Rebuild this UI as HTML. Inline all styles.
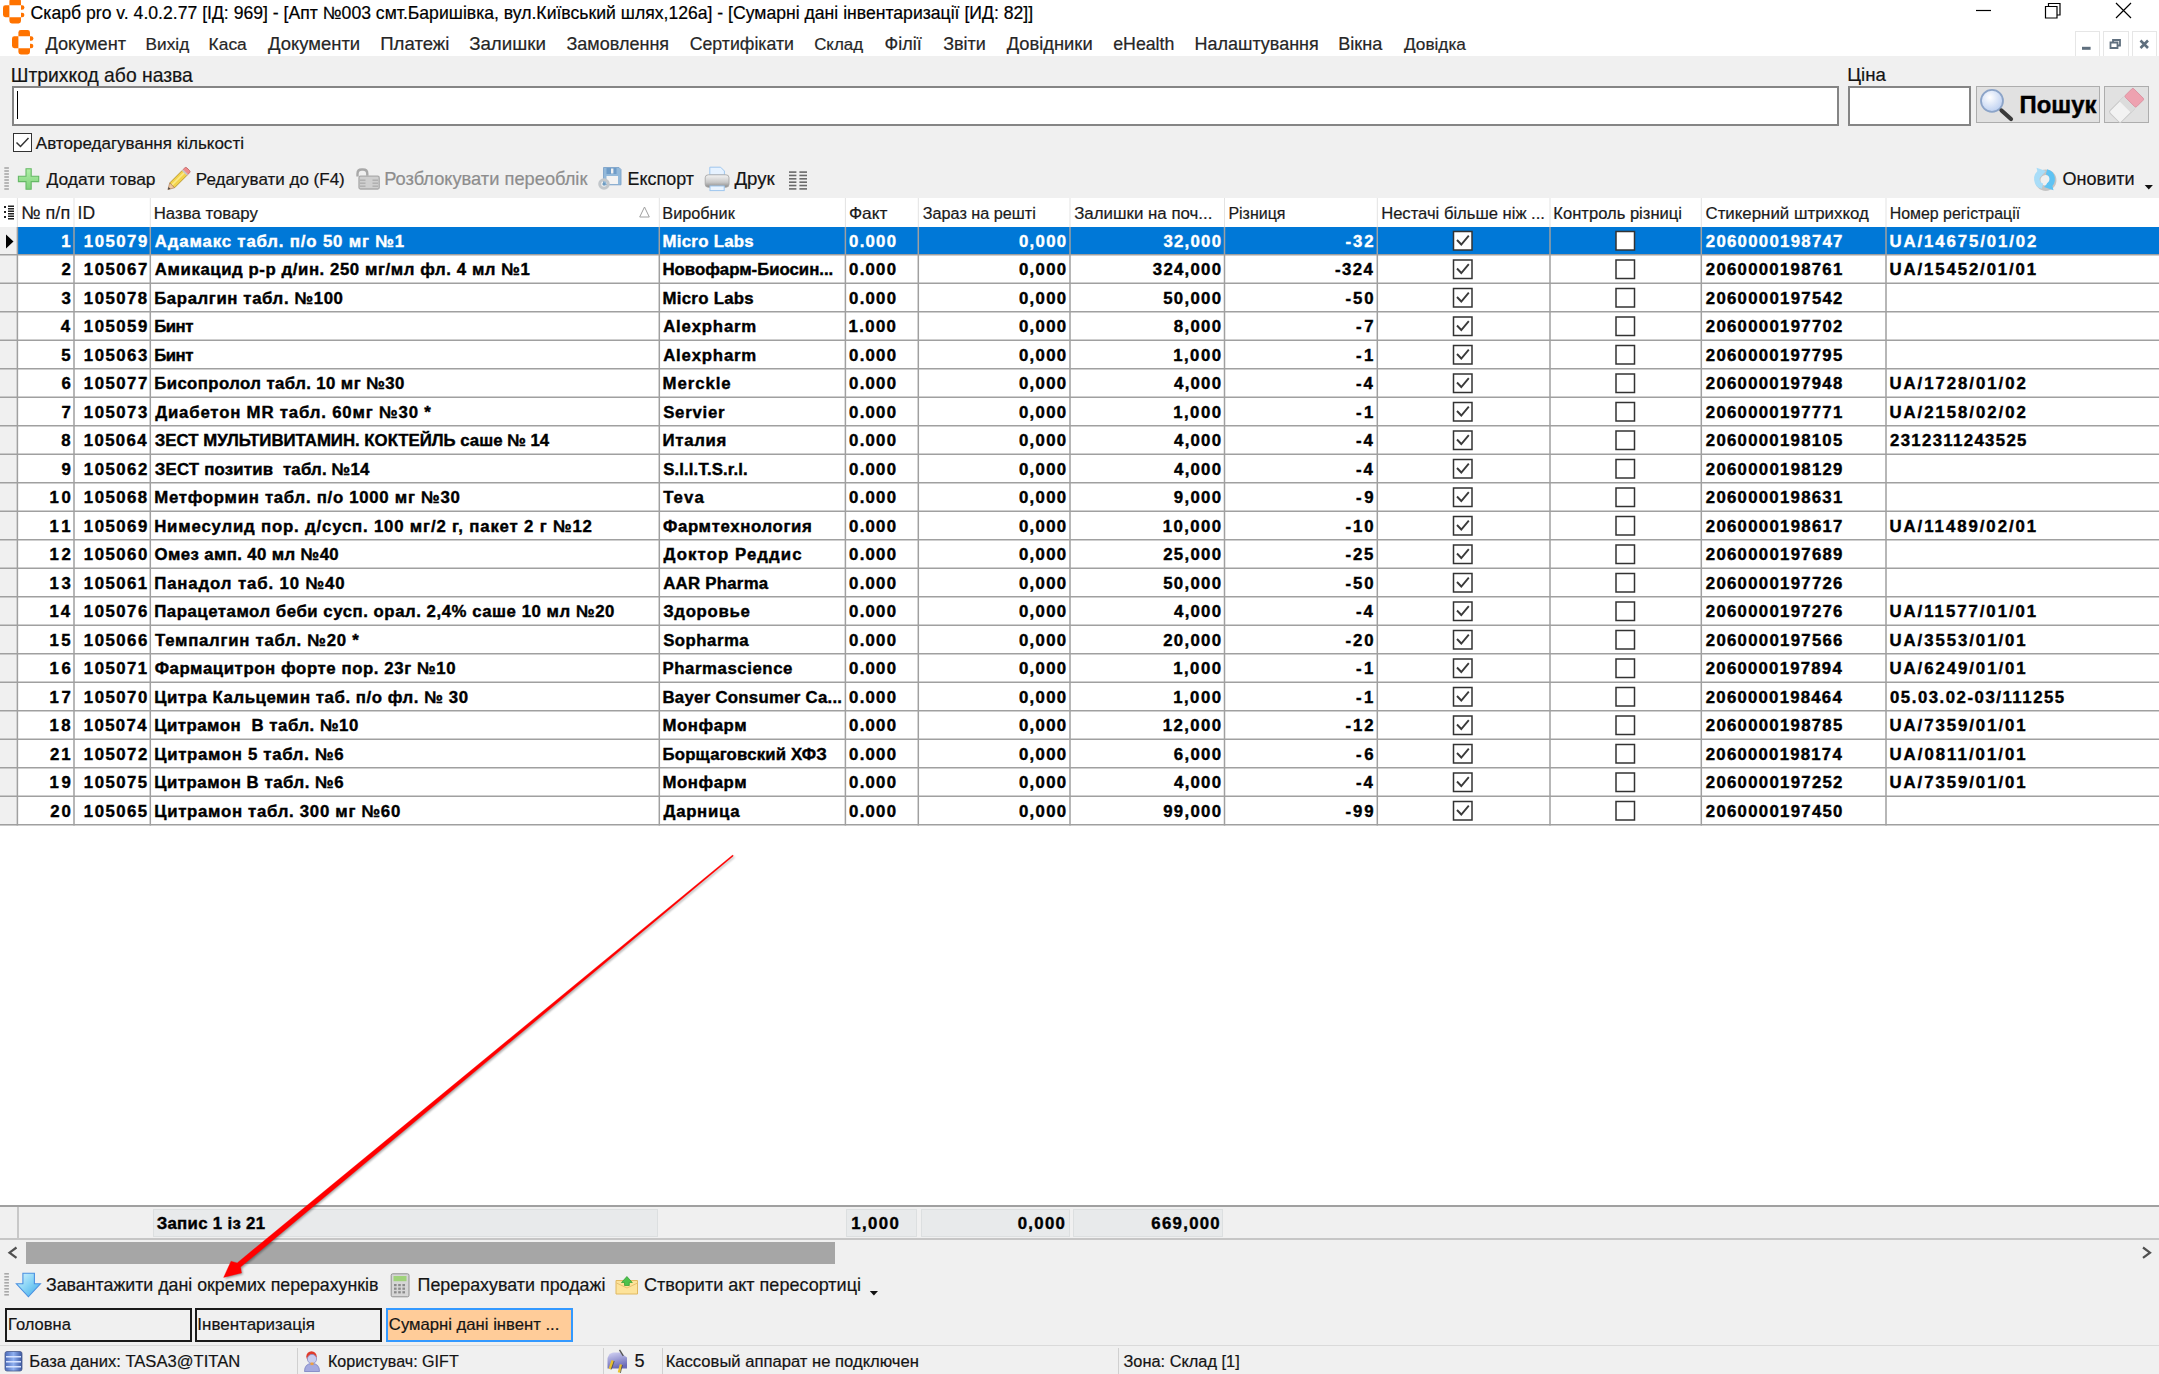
<!DOCTYPE html>
<html><head><meta charset="utf-8"><title>Скарб pro</title>
<style>
html,body{margin:0;padding:0;}
body{width:2159px;height:1374px;overflow:hidden;position:relative;background:#fff;font-family:"Liberation Sans",sans-serif;color:#000;}
.t{position:absolute;white-space:nowrap;-webkit-text-stroke:0.2px currentColor;}
.b{-webkit-text-stroke:0.4px currentColor;}
.r{position:absolute;box-sizing:border-box;}
svg{position:absolute;overflow:visible;}
</style></head><body>
<div class="t" style="top:3px;font-size:17.63px;line-height:21px;left:30.62px;">Скарб pro v. 4.0.2.77 [ІД: 969] - [Апт №003 смт.Баришівка, вул.Київський шлях,126а] - [Сумарні дані інвентаризації [ИД: 82]]</div>
<svg style="left:3.4px;top:-1.4px" width="21.4" height="24.4" viewBox="0 0 21.4 24.4">
<g fill="#ff7300">
<path d="M6.4 6.2V2.4Q6.4 0 8.8 0H15.6Q18 0 18 2.4V6.2Z"/>
<path d="M6.4 6.2V18.2H2.4Q0 18.2 0 15.8V8.6Q0 6.2 2.4 6.2Z"/>
<path d="M6.4 18.2V22Q6.4 24.4 8.8 24.4H15.6Q18 24.4 18 22V18.2Z"/>
<path d="M18 6.2H19.2Q21.4 6.2 21.4 8.4V8.5Q21.4 10.7 19.2 10.7H18Z"/>
<path d="M18 13.7H19.2Q21.4 13.7 21.4 15.9V16Q21.4 18.2 19.2 18.2H18Z"/>
</g></svg>
<svg style="left:1970px;top:0px" width="189" height="28" viewBox="0 0 189 28"><path d="M6 10.5h15" stroke="#000" stroke-width="1.2"/><path d="M75.5 6.5h11.5v11.5h-11.5z M78.5 6.5v-3h11.5v11.5h-3" fill="none" stroke="#000" stroke-width="1.2"/><path d="M146 3l15 15M161 3l-15 15" stroke="#000" stroke-width="1.2"/></svg>
<svg style="left:11.6px;top:30.2px" width="21.4" height="24.4" viewBox="0 0 21.4 24.4">
<g fill="#ff7300">
<path d="M6.4 6.2V2.4Q6.4 0 8.8 0H15.6Q18 0 18 2.4V6.2Z"/>
<path d="M6.4 6.2V18.2H2.4Q0 18.2 0 15.8V8.6Q0 6.2 2.4 6.2Z"/>
<path d="M6.4 18.2V22Q6.4 24.4 8.8 24.4H15.6Q18 24.4 18 22V18.2Z"/>
<path d="M18 6.2H19.2Q21.4 6.2 21.4 8.4V8.5Q21.4 10.7 19.2 10.7H18Z"/>
<path d="M18 13.7H19.2Q21.4 13.7 21.4 15.9V16Q21.4 18.2 19.2 18.2H18Z"/>
</g></svg>
<div class="t" style="top:33px;font-size:18.2px;line-height:22px;color:#262626;left:45.40px;">Документ</div>
<div class="t" style="top:34px;font-size:17.23px;line-height:21px;color:#262626;left:145.62px;">Вихід</div>
<div class="t" style="top:34px;font-size:17.37px;line-height:21px;color:#262626;left:208.61px;">Каса</div>
<div class="t" style="top:33px;font-size:18.47px;line-height:22px;color:#262626;left:268.00px;">Документи</div>
<div class="t" style="top:33px;font-size:18.62px;line-height:22px;color:#262626;left:380.21px;">Платежі</div>
<div class="t" style="top:33px;font-size:18.74px;line-height:22px;color:#262626;left:469.14px;">Залишки</div>
<div class="t" style="top:33px;font-size:18.02px;line-height:22px;color:#262626;left:566.46px;">Замовлення</div>
<div class="t" style="top:34px;font-size:17.73px;line-height:21px;color:#262626;left:689.71px;">Сертифікати</div>
<div class="t" style="top:35px;font-size:16.96px;line-height:20px;color:#262626;left:814.15px;">Склад</div>
<div class="t" style="top:33px;font-size:18.03px;line-height:22px;color:#262626;left:884.60px;">Філії</div>
<div class="t" style="top:33px;font-size:17.97px;line-height:22px;color:#262626;left:943.16px;">Звіти</div>
<div class="t" style="top:33px;font-size:18.33px;line-height:22px;color:#262626;left:1006.70px;">Довідники</div>
<div class="t" style="top:34px;font-size:17.76px;line-height:21px;color:#262626;left:1113.19px;">eHealth</div>
<div class="t" style="top:33px;font-size:17.98px;line-height:22px;color:#262626;left:1194.56px;">Налаштування</div>
<div class="t" style="top:33px;font-size:18.14px;line-height:22px;color:#262626;left:1338.25px;">Вікна</div>
<div class="t" style="top:34px;font-size:17.22px;line-height:21px;color:#262626;left:1404.00px;">Довідка</div>
<div class="r" style="left:2074.5px;top:31px;width:25.5px;height:25.5px;background:#fff;border:1px solid #e6e6e6;"></div>
<div class="r" style="left:2103px;top:31px;width:25.5px;height:25.5px;background:#fff;border:1px solid #e6e6e6;"></div>
<div class="r" style="left:2131.8px;top:31px;width:25.5px;height:25.5px;background:#fff;border:1px solid #e6e6e6;"></div>
<svg style="left:2074px;top:31px" width="85" height="26" viewBox="0 0 85 26"><rect x="8" y="15.8" width="8.6" height="3" fill="#5f6f7e"/><path d="M36.5 11.5h7v5.5h-7z M39 11.5v-2.5h7v5.5h-2.5" fill="none" stroke="#5f6f7e" stroke-width="1.8"/><path d="M66.5 9.5l7.5 7.5M74 9.5l-7.5 7.5" stroke="#5f6f7e" stroke-width="2.6"/></svg>
<div class="r" style="left:0px;top:56px;width:2159px;height:142px;background:#f0f0f0;"></div>
<div class="t" style="top:64px;font-size:19.32px;line-height:23px;color:#141414;left:10.75px;">Штрихкод або назва</div>
<div class="r" style="left:12px;top:86px;width:1827px;height:40px;background:#fff;border:2px solid #858585;"></div>
<div class="r" style="left:16.5px;top:91px;width:1.5px;height:28px;background:#000;"></div>
<div class="t" style="top:64px;font-size:18.65px;line-height:22px;color:#141414;left:1847.31px;">Ціна</div>
<div class="r" style="left:1848px;top:86px;width:123px;height:40px;background:#fff;border:2px solid #858585;"></div>
<div class="r" style="left:1975.5px;top:86px;width:124.5px;height:37px;background:#e1e1e1;border:1.5px solid #adadad;"></div>
<div class="t b" style="top:90px;font-size:23.89px;line-height:29px;font-weight:bold;left:2019.57px;">Пошук</div>
<div class="r" style="left:2104.4px;top:86px;width:44.4px;height:37px;background:#e1e1e1;border:1.5px solid #adadad;"></div>
<div class="r" style="left:12.5px;top:133px;width:19px;height:19px;background:#fff;border:1.5px solid #333;"></div>
<svg style="left:12.5px;top:133px" width="19" height="19" viewBox="0 0 19 19"><path d="M3.5 9.5l4 4 8-8.5" fill="none" stroke="#333" stroke-width="1.5"/></svg>
<div class="t" style="top:134px;font-size:17.04px;line-height:20px;color:#141414;left:35.80px;">Авторедагування кількості</div>
<div class="t" style="top:169px;font-size:17.4px;line-height:21px;color:#141414;left:46.50px;">Додати товар</div>
<div class="t" style="top:170px;font-size:17.01px;line-height:20px;color:#141414;left:195.84px;">Редагувати до (F4)</div>
<div class="t" style="top:168px;font-size:18.28px;line-height:22px;color:#8d8d8d;left:384.14px;">Розблокувати переоблік</div>
<div class="t" style="top:169px;font-size:17.91px;line-height:21px;color:#141414;left:627.57px;">Експорт</div>
<div class="t" style="top:168px;font-size:18.64px;line-height:22px;color:#141414;left:734.50px;">Друк</div>
<div class="t" style="top:168px;font-size:18.02px;line-height:22px;color:#141414;left:2062.58px;">Оновити</div>
<div class="r" style="left:0px;top:227px;width:17.4px;height:598.5px;background:#f0f0f0;"></div>
<div class="r" style="left:17.4px;top:227px;width:2141.6px;height:27.5px;background:#0078d7;"></div>
<svg style="left:0;top:0" width="2159" height="1374"><rect x="0" y="254.0" width="2159" height="1.5" fill="#a0a0a0"/><rect x="0" y="282.5" width="2159" height="1.5" fill="#a0a0a0"/><rect x="0" y="311.0" width="2159" height="1.5" fill="#a0a0a0"/><rect x="0" y="339.5" width="2159" height="1.5" fill="#a0a0a0"/><rect x="0" y="368.0" width="2159" height="1.5" fill="#a0a0a0"/><rect x="0" y="396.5" width="2159" height="1.5" fill="#a0a0a0"/><rect x="0" y="425.0" width="2159" height="1.5" fill="#a0a0a0"/><rect x="0" y="453.5" width="2159" height="1.5" fill="#a0a0a0"/><rect x="0" y="482.0" width="2159" height="1.5" fill="#a0a0a0"/><rect x="0" y="510.5" width="2159" height="1.5" fill="#a0a0a0"/><rect x="0" y="539.0" width="2159" height="1.5" fill="#a0a0a0"/><rect x="0" y="567.5" width="2159" height="1.5" fill="#a0a0a0"/><rect x="0" y="596.0" width="2159" height="1.5" fill="#a0a0a0"/><rect x="0" y="624.5" width="2159" height="1.5" fill="#a0a0a0"/><rect x="0" y="653.0" width="2159" height="1.5" fill="#a0a0a0"/><rect x="0" y="681.5" width="2159" height="1.5" fill="#a0a0a0"/><rect x="0" y="710.0" width="2159" height="1.5" fill="#a0a0a0"/><rect x="0" y="738.5" width="2159" height="1.5" fill="#a0a0a0"/><rect x="0" y="767.0" width="2159" height="1.5" fill="#a0a0a0"/><rect x="0" y="795.5" width="2159" height="1.5" fill="#a0a0a0"/><rect x="0" y="824.0" width="2159" height="1.5" fill="#a0a0a0"/><rect x="16.65" y="227" width="1.5" height="598.5" fill="#a0a0a0"/><rect x="16.9" y="198" width="1" height="29" fill="#e3e3e3"/><rect x="73.25" y="227" width="1.5" height="598.5" fill="#a0a0a0"/><rect x="73.5" y="198" width="1" height="29" fill="#e3e3e3"/><rect x="149.55" y="227" width="1.5" height="598.5" fill="#a0a0a0"/><rect x="149.8" y="198" width="1" height="29" fill="#e3e3e3"/><rect x="658.55" y="227" width="1.5" height="598.5" fill="#a0a0a0"/><rect x="658.8" y="198" width="1" height="29" fill="#e3e3e3"/><rect x="844.65" y="227" width="1.5" height="598.5" fill="#a0a0a0"/><rect x="844.9" y="198" width="1" height="29" fill="#e3e3e3"/><rect x="917.55" y="227" width="1.5" height="598.5" fill="#a0a0a0"/><rect x="917.8" y="198" width="1" height="29" fill="#e3e3e3"/><rect x="1069.25" y="227" width="1.5" height="598.5" fill="#a0a0a0"/><rect x="1069.5" y="198" width="1" height="29" fill="#e3e3e3"/><rect x="1223.75" y="227" width="1.5" height="598.5" fill="#a0a0a0"/><rect x="1224.0" y="198" width="1" height="29" fill="#e3e3e3"/><rect x="1376.55" y="227" width="1.5" height="598.5" fill="#a0a0a0"/><rect x="1376.8" y="198" width="1" height="29" fill="#e3e3e3"/><rect x="1549.25" y="227" width="1.5" height="598.5" fill="#a0a0a0"/><rect x="1549.5" y="198" width="1" height="29" fill="#e3e3e3"/><rect x="1700.55" y="227" width="1.5" height="598.5" fill="#a0a0a0"/><rect x="1700.8" y="198" width="1" height="29" fill="#e3e3e3"/><rect x="1885.25" y="227" width="1.5" height="598.5" fill="#a0a0a0"/><rect x="1885.5" y="198" width="1" height="29" fill="#e3e3e3"/></svg>
<div class="t" style="top:202px;font-size:18.09px;line-height:22px;color:#1a1a1a;left:21.17px;">№ п/п</div>
<div class="t" style="top:203px;font-size:17.51px;line-height:21px;color:#1a1a1a;left:77.62px;">ID</div>
<div class="t" style="top:204px;font-size:16.82px;line-height:20px;color:#1a1a1a;left:153.65px;">Назва товару</div>
<div class="t" style="top:203px;font-size:16.26px;line-height:20px;color:#1a1a1a;left:662.30px;">Виробник</div>
<div class="t" style="top:203px;font-size:17.32px;line-height:21px;color:#1a1a1a;left:848.93px;">Факт</div>
<div class="t" style="top:204px;font-size:16.22px;line-height:19px;color:#1a1a1a;left:922.81px;">Зараз на решті</div>
<div class="t" style="top:204px;font-size:16.88px;line-height:20px;color:#1a1a1a;left:1074.19px;">Залишки на поч...</div>
<div class="t" style="top:204px;font-size:15.97px;line-height:19px;color:#1a1a1a;left:1228.42px;">Різниця</div>
<div class="t" style="top:204px;font-size:16.6px;line-height:20px;color:#1a1a1a;left:1381.17px;">Нестачі більше ніж ...</div>
<div class="t" style="top:204px;font-size:16.57px;line-height:20px;color:#1a1a1a;left:1553.37px;">Контроль різниці</div>
<div class="t" style="top:204px;font-size:16.86px;line-height:20px;color:#1a1a1a;left:1705.46px;">Стикерний штрихкод</div>
<div class="t" style="top:204px;font-size:15.91px;line-height:19px;color:#1a1a1a;left:1889.73px;">Номер регістрації</div>
<svg style="left:0;top:198px" width="660" height="29" viewBox="0 0 660 29"><path d="M644.5 9l-4.8 10h9.6z" fill="none" stroke="#a0a0a0" stroke-width="1"/><g fill="#222"><rect x="4" y="8" width="2" height="2"/><rect x="4" y="13" width="2" height="2"/><rect x="4" y="18" width="2" height="2"/><rect x="8" y="7.5" width="6" height="1.5"/><rect x="8" y="10" width="6" height="1.5"/><rect x="8" y="12.5" width="6" height="1.5"/><rect x="8" y="15" width="6" height="1.5"/><rect x="8" y="17.5" width="6" height="1.5"/><rect x="8" y="20" width="6" height="1.5"/></g></svg>
<svg style="left:0;top:227px" width="17" height="28"><path d="M6 7.5v14l7.5-7z" fill="#000"/></svg>
<div class="t b" style="top:232px;font-size:16.8px;line-height:20px;color:#fff;font-weight:bold;right:2088.36px;">1</div>
<div class="t b" style="top:232px;font-size:16.8px;line-height:20px;color:#fff;font-weight:bold;letter-spacing:1.471px;right:2010.32px;">105079</div>
<div class="t b" style="top:232px;font-size:16.8px;line-height:20px;color:#fff;font-weight:bold;letter-spacing:0.836px;left:154.86px;">Адамакс табл. п/о 50 мг №1</div>
<div class="t b" style="top:232px;font-size:16.8px;line-height:20px;color:#fff;font-weight:bold;letter-spacing:0.292px;left:662.49px;">Micro Labs</div>
<div class="t b" style="top:232px;font-size:16.8px;line-height:20px;color:#fff;font-weight:bold;letter-spacing:1.218px;left:849.10px;">0.000</div>
<div class="t b" style="top:232px;font-size:16.8px;line-height:20px;color:#fff;font-weight:bold;letter-spacing:1.318px;right:1091.47px;">0,000</div>
<div class="t b" style="top:232px;font-size:16.8px;line-height:20px;color:#fff;font-weight:bold;letter-spacing:1.262px;right:936.73px;">32,000</div>
<div class="t b" style="top:232px;font-size:16.8px;line-height:20px;color:#fff;font-weight:bold;letter-spacing:1.915px;right:783.48px;">-32</div>
<div class="t b" style="top:232px;font-size:16.8px;line-height:20px;color:#fff;font-weight:bold;letter-spacing:1.275px;left:1705.80px;">2060000198747</div>
<div class="t b" style="top:232px;font-size:16.8px;line-height:20px;color:#fff;font-weight:bold;letter-spacing:1.893px;left:1889.49px;">UA/14675/01/02</div>
<div class="t b" style="top:260px;font-size:16.8px;line-height:20px;font-weight:bold;right:2088.19px;">2</div>
<div class="t b" style="top:260px;font-size:16.8px;line-height:20px;font-weight:bold;letter-spacing:1.471px;right:2010.32px;">105067</div>
<div class="t b" style="top:260px;font-size:16.8px;line-height:20px;font-weight:bold;letter-spacing:0.57px;left:154.86px;">Амикацид р-р д/ин. 250 мг/мл фл. 4 мл №1</div>
<div class="t b" style="top:260px;font-size:16.8px;line-height:20px;font-weight:bold;letter-spacing:-0.011px;left:662.49px;">Новофарм-Биосин...</div>
<div class="t b" style="top:260px;font-size:16.8px;line-height:20px;font-weight:bold;letter-spacing:1.218px;left:849.10px;">0.000</div>
<div class="t b" style="top:260px;font-size:16.8px;line-height:20px;font-weight:bold;letter-spacing:1.318px;right:1091.47px;">0,000</div>
<div class="t b" style="top:260px;font-size:16.8px;line-height:20px;font-weight:bold;letter-spacing:1.253px;right:936.74px;">324,000</div>
<div class="t b" style="top:260px;font-size:16.8px;line-height:20px;font-weight:bold;letter-spacing:1.455px;right:784.61px;">-324</div>
<div class="t b" style="top:260px;font-size:16.8px;line-height:20px;font-weight:bold;letter-spacing:1.261px;left:1705.80px;">2060000198761</div>
<div class="t b" style="top:260px;font-size:16.8px;line-height:20px;font-weight:bold;letter-spacing:1.88px;left:1889.49px;">UA/15452/01/01</div>
<div class="t b" style="top:289px;font-size:16.8px;line-height:20px;font-weight:bold;right:2088.19px;">3</div>
<div class="t b" style="top:289px;font-size:16.8px;line-height:20px;font-weight:bold;letter-spacing:1.437px;right:2010.52px;">105078</div>
<div class="t b" style="top:289px;font-size:16.8px;line-height:20px;font-weight:bold;letter-spacing:0.599px;left:154.19px;">Баралгин табл. №100</div>
<div class="t b" style="top:289px;font-size:16.8px;line-height:20px;font-weight:bold;letter-spacing:0.292px;left:662.49px;">Micro Labs</div>
<div class="t b" style="top:289px;font-size:16.8px;line-height:20px;font-weight:bold;letter-spacing:1.218px;left:849.10px;">0.000</div>
<div class="t b" style="top:289px;font-size:16.8px;line-height:20px;font-weight:bold;letter-spacing:1.318px;right:1091.47px;">0,000</div>
<div class="t b" style="top:289px;font-size:16.8px;line-height:20px;font-weight:bold;letter-spacing:1.295px;right:936.70px;">50,000</div>
<div class="t b" style="top:289px;font-size:16.8px;line-height:20px;font-weight:bold;letter-spacing:1.915px;right:783.48px;">-50</div>
<div class="t b" style="top:289px;font-size:16.8px;line-height:20px;font-weight:bold;letter-spacing:1.275px;left:1705.80px;">2060000197542</div>
<div class="t b" style="top:317px;font-size:16.8px;line-height:20px;font-weight:bold;right:2088.86px;">4</div>
<div class="t b" style="top:317px;font-size:16.8px;line-height:20px;font-weight:bold;letter-spacing:1.471px;right:2010.32px;">105059</div>
<div class="t b" style="top:317px;font-size:16.8px;line-height:20px;font-weight:bold;letter-spacing:-0.479px;left:154.19px;">Бинт</div>
<div class="t b" style="top:317px;font-size:16.8px;line-height:20px;font-weight:bold;letter-spacing:0.8px;left:663.16px;">Alexpharm</div>
<div class="t b" style="top:317px;font-size:16.8px;line-height:20px;font-weight:bold;letter-spacing:1.344px;left:848.59px;">1.000</div>
<div class="t b" style="top:317px;font-size:16.8px;line-height:20px;font-weight:bold;letter-spacing:1.318px;right:1091.47px;">0,000</div>
<div class="t b" style="top:317px;font-size:16.8px;line-height:20px;font-weight:bold;letter-spacing:1.318px;right:936.67px;">8,000</div>
<div class="t b" style="top:317px;font-size:16.8px;line-height:20px;font-weight:bold;letter-spacing:2.623px;right:782.77px;">-7</div>
<div class="t b" style="top:317px;font-size:16.8px;line-height:20px;font-weight:bold;letter-spacing:1.275px;left:1705.80px;">2060000197702</div>
<div class="t b" style="top:346px;font-size:16.8px;line-height:20px;font-weight:bold;right:2088.36px;">5</div>
<div class="t b" style="top:346px;font-size:16.8px;line-height:20px;font-weight:bold;letter-spacing:1.471px;right:2010.32px;">105063</div>
<div class="t b" style="top:346px;font-size:16.8px;line-height:20px;font-weight:bold;letter-spacing:-0.479px;left:154.19px;">Бинт</div>
<div class="t b" style="top:346px;font-size:16.8px;line-height:20px;font-weight:bold;letter-spacing:0.8px;left:663.16px;">Alexpharm</div>
<div class="t b" style="top:346px;font-size:16.8px;line-height:20px;font-weight:bold;letter-spacing:1.218px;left:849.10px;">0.000</div>
<div class="t b" style="top:346px;font-size:16.8px;line-height:20px;font-weight:bold;letter-spacing:1.318px;right:1091.47px;">0,000</div>
<div class="t b" style="top:346px;font-size:16.8px;line-height:20px;font-weight:bold;letter-spacing:1.444px;right:936.55px;">1,000</div>
<div class="t b" style="top:346px;font-size:16.8px;line-height:20px;font-weight:bold;letter-spacing:2.455px;right:783.11px;">-1</div>
<div class="t b" style="top:346px;font-size:16.8px;line-height:20px;font-weight:bold;letter-spacing:1.261px;left:1705.80px;">2060000197795</div>
<div class="t b" style="top:374px;font-size:16.8px;line-height:20px;font-weight:bold;right:2088.19px;">6</div>
<div class="t b" style="top:374px;font-size:16.8px;line-height:20px;font-weight:bold;letter-spacing:1.471px;right:2010.32px;">105077</div>
<div class="t b" style="top:374px;font-size:16.8px;line-height:20px;font-weight:bold;letter-spacing:0.405px;left:154.19px;">Бисопролол табл. 10 мг №30</div>
<div class="t b" style="top:374px;font-size:16.8px;line-height:20px;font-weight:bold;letter-spacing:0.946px;left:662.49px;">Merckle</div>
<div class="t b" style="top:374px;font-size:16.8px;line-height:20px;font-weight:bold;letter-spacing:1.218px;left:849.10px;">0.000</div>
<div class="t b" style="top:374px;font-size:16.8px;line-height:20px;font-weight:bold;letter-spacing:1.318px;right:1091.47px;">0,000</div>
<div class="t b" style="top:374px;font-size:16.8px;line-height:20px;font-weight:bold;letter-spacing:1.234px;right:936.76px;">4,000</div>
<div class="t b" style="top:374px;font-size:16.8px;line-height:20px;font-weight:bold;letter-spacing:1.951px;right:784.11px;">-4</div>
<div class="t b" style="top:374px;font-size:16.8px;line-height:20px;font-weight:bold;letter-spacing:1.261px;left:1705.80px;">2060000197948</div>
<div class="t b" style="top:374px;font-size:16.8px;line-height:20px;font-weight:bold;letter-spacing:1.95px;left:1889.49px;">UA/1728/01/02</div>
<div class="t b" style="top:403px;font-size:16.8px;line-height:20px;font-weight:bold;right:2088.19px;">7</div>
<div class="t b" style="top:403px;font-size:16.8px;line-height:20px;font-weight:bold;letter-spacing:1.471px;right:2010.32px;">105073</div>
<div class="t b" style="top:403px;font-size:16.8px;line-height:20px;font-weight:bold;letter-spacing:0.812px;left:155.20px;">Диабетон MR табл. 60мг №30 *</div>
<div class="t b" style="top:403px;font-size:16.8px;line-height:20px;font-weight:bold;letter-spacing:0.735px;left:663.16px;">Servier</div>
<div class="t b" style="top:403px;font-size:16.8px;line-height:20px;font-weight:bold;letter-spacing:1.218px;left:849.10px;">0.000</div>
<div class="t b" style="top:403px;font-size:16.8px;line-height:20px;font-weight:bold;letter-spacing:1.318px;right:1091.47px;">0,000</div>
<div class="t b" style="top:403px;font-size:16.8px;line-height:20px;font-weight:bold;letter-spacing:1.444px;right:936.55px;">1,000</div>
<div class="t b" style="top:403px;font-size:16.8px;line-height:20px;font-weight:bold;letter-spacing:2.455px;right:783.11px;">-1</div>
<div class="t b" style="top:403px;font-size:16.8px;line-height:20px;font-weight:bold;letter-spacing:1.261px;left:1705.80px;">2060000197771</div>
<div class="t b" style="top:403px;font-size:16.8px;line-height:20px;font-weight:bold;letter-spacing:1.95px;left:1889.49px;">UA/2158/02/02</div>
<div class="t b" style="top:431px;font-size:16.8px;line-height:20px;font-weight:bold;right:2088.36px;">8</div>
<div class="t b" style="top:431px;font-size:16.8px;line-height:20px;font-weight:bold;letter-spacing:1.337px;right:2011.13px;">105064</div>
<div class="t b" style="top:431px;font-size:16.8px;line-height:20px;font-weight:bold;letter-spacing:-0.001px;left:154.86px;">ЗЕСТ МУЛЬТИВИТАМИН. КОКТЕЙЛЬ саше № 14</div>
<div class="t b" style="top:431px;font-size:16.8px;line-height:20px;font-weight:bold;letter-spacing:0.685px;left:662.49px;">Италия</div>
<div class="t b" style="top:431px;font-size:16.8px;line-height:20px;font-weight:bold;letter-spacing:1.218px;left:849.10px;">0.000</div>
<div class="t b" style="top:431px;font-size:16.8px;line-height:20px;font-weight:bold;letter-spacing:1.318px;right:1091.47px;">0,000</div>
<div class="t b" style="top:431px;font-size:16.8px;line-height:20px;font-weight:bold;letter-spacing:1.234px;right:936.76px;">4,000</div>
<div class="t b" style="top:431px;font-size:16.8px;line-height:20px;font-weight:bold;letter-spacing:1.951px;right:784.11px;">-4</div>
<div class="t b" style="top:431px;font-size:16.8px;line-height:20px;font-weight:bold;letter-spacing:1.261px;left:1705.80px;">2060000198105</div>
<div class="t b" style="top:431px;font-size:16.8px;line-height:20px;font-weight:bold;letter-spacing:1.338px;left:1890.00px;">2312311243525</div>
<div class="t b" style="top:460px;font-size:16.8px;line-height:20px;font-weight:bold;right:2088.19px;">9</div>
<div class="t b" style="top:460px;font-size:16.8px;line-height:20px;font-weight:bold;letter-spacing:1.471px;right:2010.32px;">105062</div>
<div class="t b" style="top:460px;font-size:16.8px;line-height:20px;font-weight:bold;letter-spacing:0.198px;left:154.86px;">ЗЕСТ позитив  табл. №14</div>
<div class="t b" style="top:460px;font-size:16.8px;line-height:20px;font-weight:bold;letter-spacing:0.121px;left:663.16px;">S.l.l.T.S.r.l.</div>
<div class="t b" style="top:460px;font-size:16.8px;line-height:20px;font-weight:bold;letter-spacing:1.218px;left:849.10px;">0.000</div>
<div class="t b" style="top:460px;font-size:16.8px;line-height:20px;font-weight:bold;letter-spacing:1.318px;right:1091.47px;">0,000</div>
<div class="t b" style="top:460px;font-size:16.8px;line-height:20px;font-weight:bold;letter-spacing:1.234px;right:936.76px;">4,000</div>
<div class="t b" style="top:460px;font-size:16.8px;line-height:20px;font-weight:bold;letter-spacing:1.951px;right:784.11px;">-4</div>
<div class="t b" style="top:460px;font-size:16.8px;line-height:20px;font-weight:bold;letter-spacing:1.275px;left:1705.80px;">2060000198129</div>
<div class="t b" style="top:488px;font-size:16.8px;line-height:20px;font-weight:bold;letter-spacing:2.529px;right:2085.66px;">10</div>
<div class="t b" style="top:488px;font-size:16.8px;line-height:20px;font-weight:bold;letter-spacing:1.437px;right:2010.52px;">105068</div>
<div class="t b" style="top:488px;font-size:16.8px;line-height:20px;font-weight:bold;letter-spacing:0.713px;left:154.19px;">Метформин табл. п/о 1000 мг №30</div>
<div class="t b" style="top:488px;font-size:16.8px;line-height:20px;font-weight:bold;letter-spacing:1.163px;left:663.33px;">Teva</div>
<div class="t b" style="top:488px;font-size:16.8px;line-height:20px;font-weight:bold;letter-spacing:1.218px;left:849.10px;">0.000</div>
<div class="t b" style="top:488px;font-size:16.8px;line-height:20px;font-weight:bold;letter-spacing:1.318px;right:1091.47px;">0,000</div>
<div class="t b" style="top:488px;font-size:16.8px;line-height:20px;font-weight:bold;letter-spacing:1.318px;right:936.67px;">9,000</div>
<div class="t b" style="top:488px;font-size:16.8px;line-height:20px;font-weight:bold;letter-spacing:2.623px;right:782.77px;">-9</div>
<div class="t b" style="top:488px;font-size:16.8px;line-height:20px;font-weight:bold;letter-spacing:1.261px;left:1705.80px;">2060000198631</div>
<div class="t b" style="top:517px;font-size:16.8px;line-height:20px;font-weight:bold;letter-spacing:3.288px;right:2085.07px;">11</div>
<div class="t b" style="top:517px;font-size:16.8px;line-height:20px;font-weight:bold;letter-spacing:1.471px;right:2010.32px;">105069</div>
<div class="t b" style="top:517px;font-size:16.8px;line-height:20px;font-weight:bold;letter-spacing:0.815px;left:154.19px;">Нимесулид пор. д/сусп. 100 мг/2 г, пакет 2 г №12</div>
<div class="t b" style="top:517px;font-size:16.8px;line-height:20px;font-weight:bold;letter-spacing:0.638px;left:663.00px;">Фармтехнология</div>
<div class="t b" style="top:517px;font-size:16.8px;line-height:20px;font-weight:bold;letter-spacing:1.218px;left:849.10px;">0.000</div>
<div class="t b" style="top:517px;font-size:16.8px;line-height:20px;font-weight:bold;letter-spacing:1.318px;right:1091.47px;">0,000</div>
<div class="t b" style="top:517px;font-size:16.8px;line-height:20px;font-weight:bold;letter-spacing:1.396px;right:936.60px;">10,000</div>
<div class="t b" style="top:517px;font-size:16.8px;line-height:20px;font-weight:bold;letter-spacing:1.915px;right:783.48px;">-10</div>
<div class="t b" style="top:517px;font-size:16.8px;line-height:20px;font-weight:bold;letter-spacing:1.275px;left:1705.80px;">2060000198617</div>
<div class="t b" style="top:517px;font-size:16.8px;line-height:20px;font-weight:bold;letter-spacing:1.951px;left:1889.49px;">UA/11489/02/01</div>
<div class="t b" style="top:545px;font-size:16.8px;line-height:20px;font-weight:bold;letter-spacing:2.529px;right:2085.66px;">12</div>
<div class="t b" style="top:545px;font-size:16.8px;line-height:20px;font-weight:bold;letter-spacing:1.471px;right:2010.32px;">105060</div>
<div class="t b" style="top:545px;font-size:16.8px;line-height:20px;font-weight:bold;letter-spacing:0.374px;left:154.53px;">Омез амп. 40 мл №40</div>
<div class="t b" style="top:545px;font-size:16.8px;line-height:20px;font-weight:bold;letter-spacing:1.081px;left:663.50px;">Доктор Реддис</div>
<div class="t b" style="top:545px;font-size:16.8px;line-height:20px;font-weight:bold;letter-spacing:1.218px;left:849.10px;">0.000</div>
<div class="t b" style="top:545px;font-size:16.8px;line-height:20px;font-weight:bold;letter-spacing:1.318px;right:1091.47px;">0,000</div>
<div class="t b" style="top:545px;font-size:16.8px;line-height:20px;font-weight:bold;letter-spacing:1.295px;right:936.70px;">25,000</div>
<div class="t b" style="top:545px;font-size:16.8px;line-height:20px;font-weight:bold;letter-spacing:1.831px;right:783.73px;">-25</div>
<div class="t b" style="top:545px;font-size:16.8px;line-height:20px;font-weight:bold;letter-spacing:1.275px;left:1705.80px;">2060000197689</div>
<div class="t b" style="top:574px;font-size:16.8px;line-height:20px;font-weight:bold;letter-spacing:2.529px;right:2085.66px;">13</div>
<div class="t b" style="top:574px;font-size:16.8px;line-height:20px;font-weight:bold;letter-spacing:1.437px;right:2010.52px;">105061</div>
<div class="t b" style="top:574px;font-size:16.8px;line-height:20px;font-weight:bold;letter-spacing:0.878px;left:154.19px;">Панадол таб. 10 №40</div>
<div class="t b" style="top:574px;font-size:16.8px;line-height:20px;font-weight:bold;letter-spacing:0.268px;left:663.16px;">AAR Pharma</div>
<div class="t b" style="top:574px;font-size:16.8px;line-height:20px;font-weight:bold;letter-spacing:1.218px;left:849.10px;">0.000</div>
<div class="t b" style="top:574px;font-size:16.8px;line-height:20px;font-weight:bold;letter-spacing:1.318px;right:1091.47px;">0,000</div>
<div class="t b" style="top:574px;font-size:16.8px;line-height:20px;font-weight:bold;letter-spacing:1.295px;right:936.70px;">50,000</div>
<div class="t b" style="top:574px;font-size:16.8px;line-height:20px;font-weight:bold;letter-spacing:1.915px;right:783.48px;">-50</div>
<div class="t b" style="top:574px;font-size:16.8px;line-height:20px;font-weight:bold;letter-spacing:1.275px;left:1705.80px;">2060000197726</div>
<div class="t b" style="top:602px;font-size:16.8px;line-height:20px;font-weight:bold;letter-spacing:1.857px;right:2087.01px;">14</div>
<div class="t b" style="top:602px;font-size:16.8px;line-height:20px;font-weight:bold;letter-spacing:1.471px;right:2010.32px;">105076</div>
<div class="t b" style="top:602px;font-size:16.8px;line-height:20px;font-weight:bold;letter-spacing:0.531px;left:154.19px;">Парацетамол беби сусп. орал. 2,4% саше 10 мл №20</div>
<div class="t b" style="top:602px;font-size:16.8px;line-height:20px;font-weight:bold;letter-spacing:0.672px;left:663.16px;">Здоровье</div>
<div class="t b" style="top:602px;font-size:16.8px;line-height:20px;font-weight:bold;letter-spacing:1.218px;left:849.10px;">0.000</div>
<div class="t b" style="top:602px;font-size:16.8px;line-height:20px;font-weight:bold;letter-spacing:1.318px;right:1091.47px;">0,000</div>
<div class="t b" style="top:602px;font-size:16.8px;line-height:20px;font-weight:bold;letter-spacing:1.234px;right:936.76px;">4,000</div>
<div class="t b" style="top:602px;font-size:16.8px;line-height:20px;font-weight:bold;letter-spacing:1.951px;right:784.11px;">-4</div>
<div class="t b" style="top:602px;font-size:16.8px;line-height:20px;font-weight:bold;letter-spacing:1.275px;left:1705.80px;">2060000197276</div>
<div class="t b" style="top:602px;font-size:16.8px;line-height:20px;font-weight:bold;letter-spacing:1.951px;left:1889.49px;">UA/11577/01/01</div>
<div class="t b" style="top:631px;font-size:16.8px;line-height:20px;font-weight:bold;letter-spacing:2.361px;right:2086.00px;">15</div>
<div class="t b" style="top:631px;font-size:16.8px;line-height:20px;font-weight:bold;letter-spacing:1.471px;right:2010.32px;">105066</div>
<div class="t b" style="top:631px;font-size:16.8px;line-height:20px;font-weight:bold;letter-spacing:0.731px;left:155.03px;">Темпалгин табл. №20 *</div>
<div class="t b" style="top:631px;font-size:16.8px;line-height:20px;font-weight:bold;letter-spacing:0.493px;left:663.16px;">Sopharma</div>
<div class="t b" style="top:631px;font-size:16.8px;line-height:20px;font-weight:bold;letter-spacing:1.218px;left:849.10px;">0.000</div>
<div class="t b" style="top:631px;font-size:16.8px;line-height:20px;font-weight:bold;letter-spacing:1.318px;right:1091.47px;">0,000</div>
<div class="t b" style="top:631px;font-size:16.8px;line-height:20px;font-weight:bold;letter-spacing:1.295px;right:936.70px;">20,000</div>
<div class="t b" style="top:631px;font-size:16.8px;line-height:20px;font-weight:bold;letter-spacing:1.915px;right:783.48px;">-20</div>
<div class="t b" style="top:631px;font-size:16.8px;line-height:20px;font-weight:bold;letter-spacing:1.275px;left:1705.80px;">2060000197566</div>
<div class="t b" style="top:631px;font-size:16.8px;line-height:20px;font-weight:bold;letter-spacing:1.936px;left:1889.49px;">UA/3553/01/01</div>
<div class="t b" style="top:659px;font-size:16.8px;line-height:20px;font-weight:bold;letter-spacing:2.529px;right:2085.66px;">16</div>
<div class="t b" style="top:659px;font-size:16.8px;line-height:20px;font-weight:bold;letter-spacing:1.437px;right:2010.52px;">105071</div>
<div class="t b" style="top:659px;font-size:16.8px;line-height:20px;font-weight:bold;letter-spacing:0.58px;left:154.70px;">Фармацитрон форте пор. 23г №10</div>
<div class="t b" style="top:659px;font-size:16.8px;line-height:20px;font-weight:bold;letter-spacing:0.564px;left:662.49px;">Pharmascience</div>
<div class="t b" style="top:659px;font-size:16.8px;line-height:20px;font-weight:bold;letter-spacing:1.218px;left:849.10px;">0.000</div>
<div class="t b" style="top:659px;font-size:16.8px;line-height:20px;font-weight:bold;letter-spacing:1.318px;right:1091.47px;">0,000</div>
<div class="t b" style="top:659px;font-size:16.8px;line-height:20px;font-weight:bold;letter-spacing:1.444px;right:936.55px;">1,000</div>
<div class="t b" style="top:659px;font-size:16.8px;line-height:20px;font-weight:bold;letter-spacing:2.455px;right:783.11px;">-1</div>
<div class="t b" style="top:659px;font-size:16.8px;line-height:20px;font-weight:bold;letter-spacing:1.219px;left:1705.80px;">2060000197894</div>
<div class="t b" style="top:659px;font-size:16.8px;line-height:20px;font-weight:bold;letter-spacing:1.936px;left:1889.49px;">UA/6249/01/01</div>
<div class="t b" style="top:688px;font-size:16.8px;line-height:20px;font-weight:bold;letter-spacing:2.529px;right:2085.66px;">17</div>
<div class="t b" style="top:688px;font-size:16.8px;line-height:20px;font-weight:bold;letter-spacing:1.471px;right:2010.32px;">105070</div>
<div class="t b" style="top:688px;font-size:16.8px;line-height:20px;font-weight:bold;letter-spacing:0.556px;left:154.19px;">Цитра Кальцемин таб. п/о фл. № 30</div>
<div class="t b" style="top:688px;font-size:16.8px;line-height:20px;font-weight:bold;letter-spacing:0.271px;left:662.49px;">Bayer Consumer Ca...</div>
<div class="t b" style="top:688px;font-size:16.8px;line-height:20px;font-weight:bold;letter-spacing:1.218px;left:849.10px;">0.000</div>
<div class="t b" style="top:688px;font-size:16.8px;line-height:20px;font-weight:bold;letter-spacing:1.318px;right:1091.47px;">0,000</div>
<div class="t b" style="top:688px;font-size:16.8px;line-height:20px;font-weight:bold;letter-spacing:1.444px;right:936.55px;">1,000</div>
<div class="t b" style="top:688px;font-size:16.8px;line-height:20px;font-weight:bold;letter-spacing:2.455px;right:783.11px;">-1</div>
<div class="t b" style="top:688px;font-size:16.8px;line-height:20px;font-weight:bold;letter-spacing:1.219px;left:1705.80px;">2060000198464</div>
<div class="t b" style="top:688px;font-size:16.8px;line-height:20px;font-weight:bold;letter-spacing:1.517px;left:1890.00px;">05.03.02-03/111255</div>
<div class="t b" style="top:716px;font-size:16.8px;line-height:20px;font-weight:bold;letter-spacing:2.361px;right:2086.00px;">18</div>
<div class="t b" style="top:716px;font-size:16.8px;line-height:20px;font-weight:bold;letter-spacing:1.337px;right:2011.13px;">105074</div>
<div class="t b" style="top:716px;font-size:16.8px;line-height:20px;font-weight:bold;letter-spacing:0.509px;left:154.19px;">Цитрамон  В табл. №10</div>
<div class="t b" style="top:716px;font-size:16.8px;line-height:20px;font-weight:bold;letter-spacing:0.544px;left:662.49px;">Монфарм</div>
<div class="t b" style="top:716px;font-size:16.8px;line-height:20px;font-weight:bold;letter-spacing:1.218px;left:849.10px;">0.000</div>
<div class="t b" style="top:716px;font-size:16.8px;line-height:20px;font-weight:bold;letter-spacing:1.318px;right:1091.47px;">0,000</div>
<div class="t b" style="top:716px;font-size:16.8px;line-height:20px;font-weight:bold;letter-spacing:1.396px;right:936.60px;">12,000</div>
<div class="t b" style="top:716px;font-size:16.8px;line-height:20px;font-weight:bold;letter-spacing:1.915px;right:783.48px;">-12</div>
<div class="t b" style="top:716px;font-size:16.8px;line-height:20px;font-weight:bold;letter-spacing:1.261px;left:1705.80px;">2060000198785</div>
<div class="t b" style="top:716px;font-size:16.8px;line-height:20px;font-weight:bold;letter-spacing:1.936px;left:1889.49px;">UA/7359/01/01</div>
<div class="t b" style="top:745px;font-size:16.8px;line-height:20px;font-weight:bold;letter-spacing:1.857px;right:2086.50px;">21</div>
<div class="t b" style="top:745px;font-size:16.8px;line-height:20px;font-weight:bold;letter-spacing:1.471px;right:2010.32px;">105072</div>
<div class="t b" style="top:745px;font-size:16.8px;line-height:20px;font-weight:bold;letter-spacing:0.682px;left:154.19px;">Цитрамон 5 табл. №6</div>
<div class="t b" style="top:745px;font-size:16.8px;line-height:20px;font-weight:bold;letter-spacing:0.183px;left:662.49px;">Борщаговский ХФЗ</div>
<div class="t b" style="top:745px;font-size:16.8px;line-height:20px;font-weight:bold;letter-spacing:1.218px;left:849.10px;">0.000</div>
<div class="t b" style="top:745px;font-size:16.8px;line-height:20px;font-weight:bold;letter-spacing:1.318px;right:1091.47px;">0,000</div>
<div class="t b" style="top:745px;font-size:16.8px;line-height:20px;font-weight:bold;letter-spacing:1.318px;right:936.67px;">6,000</div>
<div class="t b" style="top:745px;font-size:16.8px;line-height:20px;font-weight:bold;letter-spacing:2.623px;right:782.77px;">-6</div>
<div class="t b" style="top:745px;font-size:16.8px;line-height:20px;font-weight:bold;letter-spacing:1.219px;left:1705.80px;">2060000198174</div>
<div class="t b" style="top:745px;font-size:16.8px;line-height:20px;font-weight:bold;letter-spacing:2.013px;left:1889.49px;">UA/0811/01/01</div>
<div class="t b" style="top:773px;font-size:16.8px;line-height:20px;font-weight:bold;letter-spacing:2.529px;right:2085.66px;">19</div>
<div class="t b" style="top:773px;font-size:16.8px;line-height:20px;font-weight:bold;letter-spacing:1.437px;right:2010.52px;">105075</div>
<div class="t b" style="top:773px;font-size:16.8px;line-height:20px;font-weight:bold;letter-spacing:0.527px;left:154.19px;">Цитрамон В табл. №6</div>
<div class="t b" style="top:773px;font-size:16.8px;line-height:20px;font-weight:bold;letter-spacing:0.544px;left:662.49px;">Монфарм</div>
<div class="t b" style="top:773px;font-size:16.8px;line-height:20px;font-weight:bold;letter-spacing:1.218px;left:849.10px;">0.000</div>
<div class="t b" style="top:773px;font-size:16.8px;line-height:20px;font-weight:bold;letter-spacing:1.318px;right:1091.47px;">0,000</div>
<div class="t b" style="top:773px;font-size:16.8px;line-height:20px;font-weight:bold;letter-spacing:1.234px;right:936.76px;">4,000</div>
<div class="t b" style="top:773px;font-size:16.8px;line-height:20px;font-weight:bold;letter-spacing:1.951px;right:784.11px;">-4</div>
<div class="t b" style="top:773px;font-size:16.8px;line-height:20px;font-weight:bold;letter-spacing:1.275px;left:1705.80px;">2060000197252</div>
<div class="t b" style="top:773px;font-size:16.8px;line-height:20px;font-weight:bold;letter-spacing:1.936px;left:1889.49px;">UA/7359/01/01</div>
<div class="t b" style="top:802px;font-size:16.8px;line-height:20px;font-weight:bold;letter-spacing:2.025px;right:2086.17px;">20</div>
<div class="t b" style="top:802px;font-size:16.8px;line-height:20px;font-weight:bold;letter-spacing:1.437px;right:2010.52px;">105065</div>
<div class="t b" style="top:802px;font-size:16.8px;line-height:20px;font-weight:bold;letter-spacing:0.702px;left:154.19px;">Цитрамон табл. 300 мг №60</div>
<div class="t b" style="top:802px;font-size:16.8px;line-height:20px;font-weight:bold;letter-spacing:0.69px;left:663.50px;">Дарница</div>
<div class="t b" style="top:802px;font-size:16.8px;line-height:20px;font-weight:bold;letter-spacing:1.218px;left:849.10px;">0.000</div>
<div class="t b" style="top:802px;font-size:16.8px;line-height:20px;font-weight:bold;letter-spacing:1.318px;right:1091.47px;">0,000</div>
<div class="t b" style="top:802px;font-size:16.8px;line-height:20px;font-weight:bold;letter-spacing:1.295px;right:936.70px;">99,000</div>
<div class="t b" style="top:802px;font-size:16.8px;line-height:20px;font-weight:bold;letter-spacing:1.915px;right:783.48px;">-99</div>
<div class="t b" style="top:802px;font-size:16.8px;line-height:20px;font-weight:bold;letter-spacing:1.275px;left:1705.80px;">2060000197450</div>
<svg style="left:0;top:0" width="2159" height="1374"><rect x="1453.5" y="231.5" width="18.5" height="18.5" fill="#fff" stroke="#333" stroke-width="1.5"/><path d="M1457 240.0l4.3 4.5 7.5-8.8" fill="none" stroke="#3a3a3a" stroke-width="1.9"/><rect x="1616" y="231.5" width="18.5" height="18.5" fill="#fff" stroke="#333" stroke-width="1.5"/><rect x="1453.5" y="260.0" width="18.5" height="18.5" fill="#fff" stroke="#333" stroke-width="1.5"/><path d="M1457 268.5l4.3 4.5 7.5-8.8" fill="none" stroke="#3a3a3a" stroke-width="1.9"/><rect x="1616" y="260.0" width="18.5" height="18.5" fill="#fff" stroke="#333" stroke-width="1.5"/><rect x="1453.5" y="288.5" width="18.5" height="18.5" fill="#fff" stroke="#333" stroke-width="1.5"/><path d="M1457 297.0l4.3 4.5 7.5-8.8" fill="none" stroke="#3a3a3a" stroke-width="1.9"/><rect x="1616" y="288.5" width="18.5" height="18.5" fill="#fff" stroke="#333" stroke-width="1.5"/><rect x="1453.5" y="317.0" width="18.5" height="18.5" fill="#fff" stroke="#333" stroke-width="1.5"/><path d="M1457 325.5l4.3 4.5 7.5-8.8" fill="none" stroke="#3a3a3a" stroke-width="1.9"/><rect x="1616" y="317.0" width="18.5" height="18.5" fill="#fff" stroke="#333" stroke-width="1.5"/><rect x="1453.5" y="345.5" width="18.5" height="18.5" fill="#fff" stroke="#333" stroke-width="1.5"/><path d="M1457 354.0l4.3 4.5 7.5-8.8" fill="none" stroke="#3a3a3a" stroke-width="1.9"/><rect x="1616" y="345.5" width="18.5" height="18.5" fill="#fff" stroke="#333" stroke-width="1.5"/><rect x="1453.5" y="374.0" width="18.5" height="18.5" fill="#fff" stroke="#333" stroke-width="1.5"/><path d="M1457 382.5l4.3 4.5 7.5-8.8" fill="none" stroke="#3a3a3a" stroke-width="1.9"/><rect x="1616" y="374.0" width="18.5" height="18.5" fill="#fff" stroke="#333" stroke-width="1.5"/><rect x="1453.5" y="402.5" width="18.5" height="18.5" fill="#fff" stroke="#333" stroke-width="1.5"/><path d="M1457 411.0l4.3 4.5 7.5-8.8" fill="none" stroke="#3a3a3a" stroke-width="1.9"/><rect x="1616" y="402.5" width="18.5" height="18.5" fill="#fff" stroke="#333" stroke-width="1.5"/><rect x="1453.5" y="431.0" width="18.5" height="18.5" fill="#fff" stroke="#333" stroke-width="1.5"/><path d="M1457 439.5l4.3 4.5 7.5-8.8" fill="none" stroke="#3a3a3a" stroke-width="1.9"/><rect x="1616" y="431.0" width="18.5" height="18.5" fill="#fff" stroke="#333" stroke-width="1.5"/><rect x="1453.5" y="459.5" width="18.5" height="18.5" fill="#fff" stroke="#333" stroke-width="1.5"/><path d="M1457 468.0l4.3 4.5 7.5-8.8" fill="none" stroke="#3a3a3a" stroke-width="1.9"/><rect x="1616" y="459.5" width="18.5" height="18.5" fill="#fff" stroke="#333" stroke-width="1.5"/><rect x="1453.5" y="488.0" width="18.5" height="18.5" fill="#fff" stroke="#333" stroke-width="1.5"/><path d="M1457 496.5l4.3 4.5 7.5-8.8" fill="none" stroke="#3a3a3a" stroke-width="1.9"/><rect x="1616" y="488.0" width="18.5" height="18.5" fill="#fff" stroke="#333" stroke-width="1.5"/><rect x="1453.5" y="516.5" width="18.5" height="18.5" fill="#fff" stroke="#333" stroke-width="1.5"/><path d="M1457 525.0l4.3 4.5 7.5-8.8" fill="none" stroke="#3a3a3a" stroke-width="1.9"/><rect x="1616" y="516.5" width="18.5" height="18.5" fill="#fff" stroke="#333" stroke-width="1.5"/><rect x="1453.5" y="545.0" width="18.5" height="18.5" fill="#fff" stroke="#333" stroke-width="1.5"/><path d="M1457 553.5l4.3 4.5 7.5-8.8" fill="none" stroke="#3a3a3a" stroke-width="1.9"/><rect x="1616" y="545.0" width="18.5" height="18.5" fill="#fff" stroke="#333" stroke-width="1.5"/><rect x="1453.5" y="573.5" width="18.5" height="18.5" fill="#fff" stroke="#333" stroke-width="1.5"/><path d="M1457 582.0l4.3 4.5 7.5-8.8" fill="none" stroke="#3a3a3a" stroke-width="1.9"/><rect x="1616" y="573.5" width="18.5" height="18.5" fill="#fff" stroke="#333" stroke-width="1.5"/><rect x="1453.5" y="602.0" width="18.5" height="18.5" fill="#fff" stroke="#333" stroke-width="1.5"/><path d="M1457 610.5l4.3 4.5 7.5-8.8" fill="none" stroke="#3a3a3a" stroke-width="1.9"/><rect x="1616" y="602.0" width="18.5" height="18.5" fill="#fff" stroke="#333" stroke-width="1.5"/><rect x="1453.5" y="630.5" width="18.5" height="18.5" fill="#fff" stroke="#333" stroke-width="1.5"/><path d="M1457 639.0l4.3 4.5 7.5-8.8" fill="none" stroke="#3a3a3a" stroke-width="1.9"/><rect x="1616" y="630.5" width="18.5" height="18.5" fill="#fff" stroke="#333" stroke-width="1.5"/><rect x="1453.5" y="659.0" width="18.5" height="18.5" fill="#fff" stroke="#333" stroke-width="1.5"/><path d="M1457 667.5l4.3 4.5 7.5-8.8" fill="none" stroke="#3a3a3a" stroke-width="1.9"/><rect x="1616" y="659.0" width="18.5" height="18.5" fill="#fff" stroke="#333" stroke-width="1.5"/><rect x="1453.5" y="687.5" width="18.5" height="18.5" fill="#fff" stroke="#333" stroke-width="1.5"/><path d="M1457 696.0l4.3 4.5 7.5-8.8" fill="none" stroke="#3a3a3a" stroke-width="1.9"/><rect x="1616" y="687.5" width="18.5" height="18.5" fill="#fff" stroke="#333" stroke-width="1.5"/><rect x="1453.5" y="716.0" width="18.5" height="18.5" fill="#fff" stroke="#333" stroke-width="1.5"/><path d="M1457 724.5l4.3 4.5 7.5-8.8" fill="none" stroke="#3a3a3a" stroke-width="1.9"/><rect x="1616" y="716.0" width="18.5" height="18.5" fill="#fff" stroke="#333" stroke-width="1.5"/><rect x="1453.5" y="744.5" width="18.5" height="18.5" fill="#fff" stroke="#333" stroke-width="1.5"/><path d="M1457 753.0l4.3 4.5 7.5-8.8" fill="none" stroke="#3a3a3a" stroke-width="1.9"/><rect x="1616" y="744.5" width="18.5" height="18.5" fill="#fff" stroke="#333" stroke-width="1.5"/><rect x="1453.5" y="773.0" width="18.5" height="18.5" fill="#fff" stroke="#333" stroke-width="1.5"/><path d="M1457 781.5l4.3 4.5 7.5-8.8" fill="none" stroke="#3a3a3a" stroke-width="1.9"/><rect x="1616" y="773.0" width="18.5" height="18.5" fill="#fff" stroke="#333" stroke-width="1.5"/><rect x="1453.5" y="801.5" width="18.5" height="18.5" fill="#fff" stroke="#333" stroke-width="1.5"/><path d="M1457 810.0l4.3 4.5 7.5-8.8" fill="none" stroke="#3a3a3a" stroke-width="1.9"/><rect x="1616" y="801.5" width="18.5" height="18.5" fill="#fff" stroke="#333" stroke-width="1.5"/></svg>
<div class="r" style="left:0px;top:1204.5px;width:2159px;height:2px;background:#a0a0a0;"></div>
<div class="r" style="left:0px;top:1206.5px;width:2159px;height:33px;background:#f0f0f0;"></div>
<div class="r" style="left:17px;top:1206.5px;width:1.5px;height:33px;background:#c8c8c8;"></div>
<div class="r" style="left:152.8px;top:1208.8px;width:505.2px;height:28px;background:#e8eaeb;border:1px solid #dcdfe0;"></div>
<div class="r" style="left:845.5px;top:1208.8px;width:71.5px;height:28px;background:#e8eaeb;border:1px solid #dcdfe0;"></div>
<div class="r" style="left:920.5px;top:1208.8px;width:149.5px;height:28px;background:#e8eaeb;border:1px solid #dcdfe0;"></div>
<div class="r" style="left:1072.5px;top:1208.8px;width:150.5px;height:28px;background:#e8eaeb;border:1px solid #dcdfe0;"></div>
<div class="r" style="left:0px;top:1238px;width:2159px;height:2px;background:#c6c6c6;"></div>
<div class="t b" style="top:1214px;font-size:16.8px;line-height:20px;font-weight:bold;letter-spacing:0.311px;left:156.66px;">Запис 1 із 21</div>
<div class="t b" style="top:1214px;font-size:16.8px;line-height:20px;font-weight:bold;letter-spacing:1.444px;left:851.19px;">1,000</div>
<div class="t b" style="top:1214px;font-size:16.8px;line-height:20px;font-weight:bold;letter-spacing:1.318px;right:1092.77px;">0,000</div>
<div class="t b" style="top:1214px;font-size:16.8px;line-height:20px;font-weight:bold;letter-spacing:1.281px;right:938.01px;">669,000</div>
<div class="r" style="left:0px;top:1239.5px;width:2159px;height:26px;background:#f0f0f0;"></div>
<div class="r" style="left:25.5px;top:1241.6px;width:809.5px;height:22.2px;background:#a6a6a6;"></div>
<svg style="left:0;top:1240px" width="2159" height="26"><path d="M16.5 7.5l-7 5.2 7 5.2" fill="none" stroke="#505050" stroke-width="2.2"/><path d="M2143 7.5l7 5.2-7 5.2" fill="none" stroke="#505050" stroke-width="2.2"/></svg>
<div class="r" style="left:0px;top:1265.5px;width:2159px;height:80px;background:#f0f0f0;"></div>
<div class="t" style="top:1275px;font-size:17.79px;line-height:21px;color:#141414;left:45.97px;">Завантажити дані окремих перерахунків</div>
<div class="t" style="top:1275px;font-size:17.89px;line-height:21px;color:#141414;left:417.57px;">Перерахувати продажі</div>
<div class="t" style="top:1274px;font-size:18.04px;line-height:22px;color:#141414;left:644.10px;">Створити акт пересортиці</div>
<div class="r" style="left:4.9px;top:1307.5px;width:186.8px;height:34.2px;background:#f0f0f0;border:2px solid #1a1a1a;"></div>
<div class="r" style="left:195.3px;top:1307.5px;width:186.7px;height:34.2px;background:#f0f0f0;border:2px solid #1a1a1a;"></div>
<div class="r" style="left:386px;top:1308px;width:186.7px;height:33.7px;background:#ffcc99;border:2px solid #3399ff;"></div>
<div class="t" style="top:1315px;font-size:16.52px;line-height:20px;color:#141414;left:8.08px;">Головна</div>
<div class="t" style="top:1315px;font-size:17.0px;line-height:20px;color:#141414;left:197.27px;">Інвентаризація</div>
<div class="t" style="top:1315px;font-size:16.68px;line-height:20px;color:#141414;left:388.87px;">Сумарні дані інвент ...</div>
<div class="r" style="left:0px;top:1345.5px;width:2159px;height:28.5px;background:#f0f0f0;"></div>
<div class="r" style="left:0px;top:1344.5px;width:2159px;height:1px;background:#dadada;"></div>
<div class="r" style="left:297.4px;top:1348px;width:1px;height:26px;background:#d0d0d0;"></div>
<div class="r" style="left:603.4px;top:1348px;width:1px;height:26px;background:#d0d0d0;"></div>
<div class="r" style="left:662.4px;top:1348px;width:1px;height:26px;background:#d0d0d0;"></div>
<div class="r" style="left:1117.8px;top:1348px;width:1px;height:26px;background:#d0d0d0;"></div>
<div class="t" style="top:1352px;font-size:16.58px;line-height:20px;color:#141414;left:29.27px;">База даних: TASA3@TITAN</div>
<div class="t" style="top:1352px;font-size:16.09px;line-height:19px;color:#141414;left:328.01px;">Користувач: GIFT</div>
<div class="t" style="top:1350px;font-size:18.13px;line-height:22px;color:#141414;left:634.57px;">5</div>
<div class="t" style="top:1352px;font-size:16.63px;line-height:20px;color:#141414;left:665.67px;">Кассовый аппарат не подключен</div>
<div class="t" style="top:1351px;font-size:16.35px;line-height:20px;color:#141414;left:1123.51px;">Зона: Склад [1]</div>
<svg style="left:0;top:0" width="2159" height="1374"><defs><linearGradient id="gPlus" x1="0" y1="0" x2="0" y2="1"><stop offset="0" stop-color="#b0f0a8"/><stop offset="1" stop-color="#7fcf7a"/></linearGradient><linearGradient id="gBlue" x1="0" y1="0" x2="1" y2="1"><stop offset="0" stop-color="#d8f6ff"/><stop offset="0.5" stop-color="#86d3f5"/><stop offset="1" stop-color="#3aa5ea"/></linearGradient><linearGradient id="gPrn" x1="0" y1="0" x2="0" y2="1"><stop offset="0" stop-color="#f4f4f4"/><stop offset="0.6" stop-color="#c8c8c8"/><stop offset="1" stop-color="#8a8a8a"/></linearGradient><linearGradient id="gDb" x1="0" y1="0" x2="1" y2="0"><stop offset="0" stop-color="#4a6ab8"/><stop offset="0.5" stop-color="#8fb0f0"/><stop offset="1" stop-color="#3a56a0"/></linearGradient><radialGradient id="gMag" cx="0.4" cy="0.35" r="0.7"><stop offset="0" stop-color="#ffffff"/><stop offset="1" stop-color="#b9cdf0"/></radialGradient></defs><rect x="4.3" y="167.2" width="4.6" height="1.6" fill="#a9a9a9"/><rect x="4.3" y="170.2" width="4.6" height="1.6" fill="#a9a9a9"/><rect x="4.3" y="173.2" width="4.6" height="1.6" fill="#a9a9a9"/><rect x="4.3" y="176.2" width="4.6" height="1.6" fill="#a9a9a9"/><rect x="4.3" y="179.2" width="4.6" height="1.6" fill="#a9a9a9"/><rect x="4.3" y="182.2" width="4.6" height="1.6" fill="#a9a9a9"/><rect x="4.3" y="185.2" width="4.6" height="1.6" fill="#a9a9a9"/><rect x="4.3" y="188.2" width="4.6" height="1.6" fill="#a9a9a9"/><rect x="4.3" y="1273.0" width="4.6" height="1.6" fill="#a9a9a9"/><rect x="4.3" y="1276.0" width="4.6" height="1.6" fill="#a9a9a9"/><rect x="4.3" y="1279.0" width="4.6" height="1.6" fill="#a9a9a9"/><rect x="4.3" y="1282.0" width="4.6" height="1.6" fill="#a9a9a9"/><rect x="4.3" y="1285.0" width="4.6" height="1.6" fill="#a9a9a9"/><rect x="4.3" y="1288.0" width="4.6" height="1.6" fill="#a9a9a9"/><rect x="4.3" y="1291.0" width="4.6" height="1.6" fill="#a9a9a9"/><rect x="4.3" y="1294.0" width="4.6" height="1.6" fill="#a9a9a9"/><path d="M26 168.8h5.2v7.4h7.5v5.4h-7.5v7.7h-5.2v-7.7h-7.6v-5.4h7.6z" fill="url(#gPlus)" stroke="#66b866" stroke-width="1.1"/><g transform="translate(178.5 179) rotate(-45)"><rect x="-9" y="-3.4" width="18" height="6.8" fill="#f3d34a" stroke="#b8952c" stroke-width="0.9"/><rect x="-9" y="-1.2" width="18" height="1.6" fill="#fbe88a"/><path d="M9 -3.4h3.2q1.6 0 1.6 1.6v3.6q0 1.6-1.6 1.6h-3.2z" fill="#f08a8a" stroke="#c06060" stroke-width="0.8"/><rect x="8.2" y="-3.4" width="1.8" height="6.8" fill="#c8c8c8"/><path d="M-9 -3.4l-6 3.4 6 3.4z" fill="#f0c89a" stroke="#b08060" stroke-width="0.7"/><path d="M-12.6 -1.4l-2.4 1.4 2.4 1.4z" fill="#444"/></g><path d="M357.5 176.5v-2.8q0-4.2 4.3-4.2h1.2q4.3 0 4.3 4.2v2" fill="none" stroke="#a8a8a8" stroke-width="2.4"/><rect x="359" y="176.2" width="20.2" height="12.8" rx="1.5" fill="#cfcfcf" stroke="#a9a9a9" stroke-width="1.3"/><g fill="#adadad"><rect x="360" y="179.5" width="5.5" height="1.4"/><rect x="372.5" y="179.5" width="5.5" height="1.4"/><rect x="360" y="182.5" width="5.5" height="1.4"/><rect x="372.5" y="182.5" width="5.5" height="1.4"/><rect x="360" y="185.5" width="5.5" height="1.4"/><rect x="372.5" y="185.5" width="5.5" height="1.4"/></g><path d="M603.5 167.5h15.5l2 2v15.3h-17.5z" fill="#93b9da" stroke="#7da3c8" stroke-width="0.9"/><rect x="606.5" y="176" width="11.5" height="8" fill="#f3f3f3"/><rect x="606.5" y="168" width="10" height="6" fill="#6e9cc8"/><rect x="611" y="168.5" width="2.4" height="5" fill="#f0f0f0"/><circle cx="604" cy="184" r="4.3" fill="none" stroke="#c2c7cb" stroke-width="3"/><circle cx="604" cy="184" r="1.6" fill="#6c9bc0"/><path d="M709.8 167.2h10.8l3.8 3.8v4h-14.6z" fill="#e6f2ff" stroke="#9ec6ee" stroke-width="1"/><rect x="705.2" y="174.8" width="23.8" height="12.4" rx="3" fill="url(#gPrn)" stroke="#a8a8a8" stroke-width="0.9"/><rect x="710" y="186" width="14.2" height="4.6" fill="#eaf4ff" stroke="#9ec6ee" stroke-width="1"/><rect x="789" y="171.30" width="7.4" height="1.6" fill="#6a6a6a"/><rect x="799.4" y="171.30" width="7.6" height="1.6" fill="#6a6a6a"/><rect x="789" y="174.66" width="7.4" height="1.6" fill="#6a6a6a"/><rect x="799.4" y="174.66" width="7.6" height="1.6" fill="#6a6a6a"/><rect x="789" y="178.02" width="7.4" height="1.6" fill="#6a6a6a"/><rect x="799.4" y="178.02" width="7.6" height="1.6" fill="#6a6a6a"/><rect x="789" y="181.38" width="7.4" height="1.6" fill="#6a6a6a"/><rect x="799.4" y="181.38" width="7.6" height="1.6" fill="#6a6a6a"/><rect x="789" y="184.74" width="7.4" height="1.6" fill="#6a6a6a"/><rect x="799.4" y="184.74" width="7.6" height="1.6" fill="#6a6a6a"/><rect x="789" y="188.10" width="7.4" height="1.6" fill="#6a6a6a"/><rect x="799.4" y="188.10" width="7.6" height="1.6" fill="#6a6a6a"/><g transform="translate(1.2 1.2)" opacity="0.18"><circle cx="2044.5" cy="179" r="8" fill="none" stroke="#000" stroke-width="5.5"/></g><path d="M2042.5 186.2A7.5 7.5 0 0 1 2041 172.2" fill="none" stroke="#a9ddf8" stroke-width="5.5"/><path d="M2036.5 167.8l9.5 3.2-6.8 7.2z" fill="#a9ddf8"/><path d="M2046.5 171.8A7.5 7.5 0 0 1 2048 185.8" fill="none" stroke="#5fc3f3" stroke-width="5.5"/><path d="M2053.5 190.2l-9.5-3.2 6.8-7.2z" fill="#5fc3f3"/><path d="M2144.7 185h8.2l-4.1 4.6z" fill="#111"/><path d="M869.8 1291h8.2l-4.1 4.6z" fill="#111"/><circle cx="1992" cy="100.8" r="11" fill="url(#gMag)" stroke="#8ca4c8" stroke-width="1.8"/><path d="M2001.5 110.5l9.5 8.5" stroke="#3a3a3a" stroke-width="4.2" stroke-linecap="round"/><g transform="translate(2126.5 105.5) rotate(-45)"><rect x="-17" y="-8" width="22" height="16" rx="2" fill="#f2f2f2" stroke="#c9c9c9" stroke-width="1"/><rect x="-2" y="-8" width="8" height="16" fill="#dcdcdc"/><rect x="5" y="-8" width="12" height="16" rx="1.5" fill="#eea2b0" stroke="#d98c9c" stroke-width="0.8"/></g><path d="M22.9 1273.2h11.5v10.6h6l-12 13-12-13h6.5z" fill="url(#gBlue)" stroke="#4a90e0" stroke-width="1.1"/><rect x="391.2" y="1273.8" width="17.8" height="23" rx="1.5" fill="#d6d6d6" stroke="#8f8f8f" stroke-width="1"/><rect x="393.5" y="1276" width="13" height="5.2" fill="#9fd27a"/><rect x="394.0" y="1284.0" width="2.6" height="2.2" fill="#8a8a8a"/><rect x="398.2" y="1284.0" width="2.6" height="2.2" fill="#8a8a8a"/><rect x="402.4" y="1284.0" width="2.6" height="2.2" fill="#8a8a8a"/><rect x="394.0" y="1287.6" width="2.6" height="2.2" fill="#8a8a8a"/><rect x="398.2" y="1287.6" width="2.6" height="2.2" fill="#8a8a8a"/><rect x="402.4" y="1287.6" width="2.6" height="2.2" fill="#8a8a8a"/><rect x="394.0" y="1291.2" width="2.6" height="2.2" fill="#8a8a8a"/><rect x="398.2" y="1291.2" width="2.6" height="2.2" fill="#8a8a8a"/><rect x="402.4" y="1291.2" width="2.6" height="2.2" fill="#8a8a8a"/><path d="M616 1280.5h21.5v13.5h-21.5z" fill="#fde39a" stroke="#e0b860" stroke-width="1"/><path d="M616.5 1283l10.5 5 10.5-5" fill="none" stroke="#e8c070" stroke-width="1"/><path d="M621.5 1282.5l5.4-6 5.4 6h-3v3h-4.8v-3z" fill="#4cc24c" stroke="#2f9a2f" stroke-width="0.7"/><rect x="5" y="1351.5" width="17" height="19.5" rx="2" fill="url(#gDb)" stroke="#4a5a8a" stroke-width="0.8"/><g fill="#d8e4ff"><rect x="6" y="1356" width="15" height="1.5"/><rect x="6" y="1361" width="15" height="1.5"/><rect x="6" y="1366" width="15" height="1.5"/></g><circle cx="311.5" cy="1356.5" r="5.2" fill="#e03a2a"/><circle cx="312" cy="1359" r="4.6" fill="#c8ccee" stroke="#8a90c8" stroke-width="0.8"/><path d="M304.5 1371.5q0-8 7.5-8t7.5 8z" fill="#a4aae0" stroke="#7a80c0" stroke-width="0.8"/><rect x="310.5" y="1362.5" width="3" height="2.6" fill="#f0a040"/><defs><linearGradient id="gRob" x1="0" y1="0" x2="0.3" y2="1"><stop offset="0" stop-color="#d4d4f4"/><stop offset="1" stop-color="#6a6ab8"/></linearGradient></defs><path d="M607.5 1358l2-4 3.5-1.5h7l7 5v11h-19.5z" fill="url(#gRob)"/><path d="M619.5 1349.8l3.8 6" stroke="#555" stroke-width="1.4"/><path d="M612.8 1360.5l-3 8.5M621 1364.5l-2 8" stroke="#e8c030" stroke-width="2.6"/><path d="M614.2 1361l-3 8.5M622.4 1365l-2 8" stroke="#333" stroke-width="0.9" opacity="0.7"/></svg>
<svg style="left:0;top:0" width="2159" height="1374"><defs><filter id="sh" x="-5%" y="-5%" width="110%" height="110%"><feGaussianBlur stdDeviation="0.9"/></filter></defs><path d="M732.62 855.04 L237.15 1262.88 L231.00 1261.20 L223.60 1277.40 L241.50 1273.00 L240.65 1267.12 L733.38 855.96Z" fill="#000" opacity="0.35" transform="translate(1.3 1.3)" filter="url(#sh)"/><path d="M732.62 855.04 L237.15 1262.88 L231.00 1261.20 L223.60 1277.40 L241.50 1273.00 L240.65 1267.12 L733.38 855.96Z" fill="#f00" stroke="#f00" stroke-width="0.3" stroke-linejoin="round"/></svg>
</body></html>
